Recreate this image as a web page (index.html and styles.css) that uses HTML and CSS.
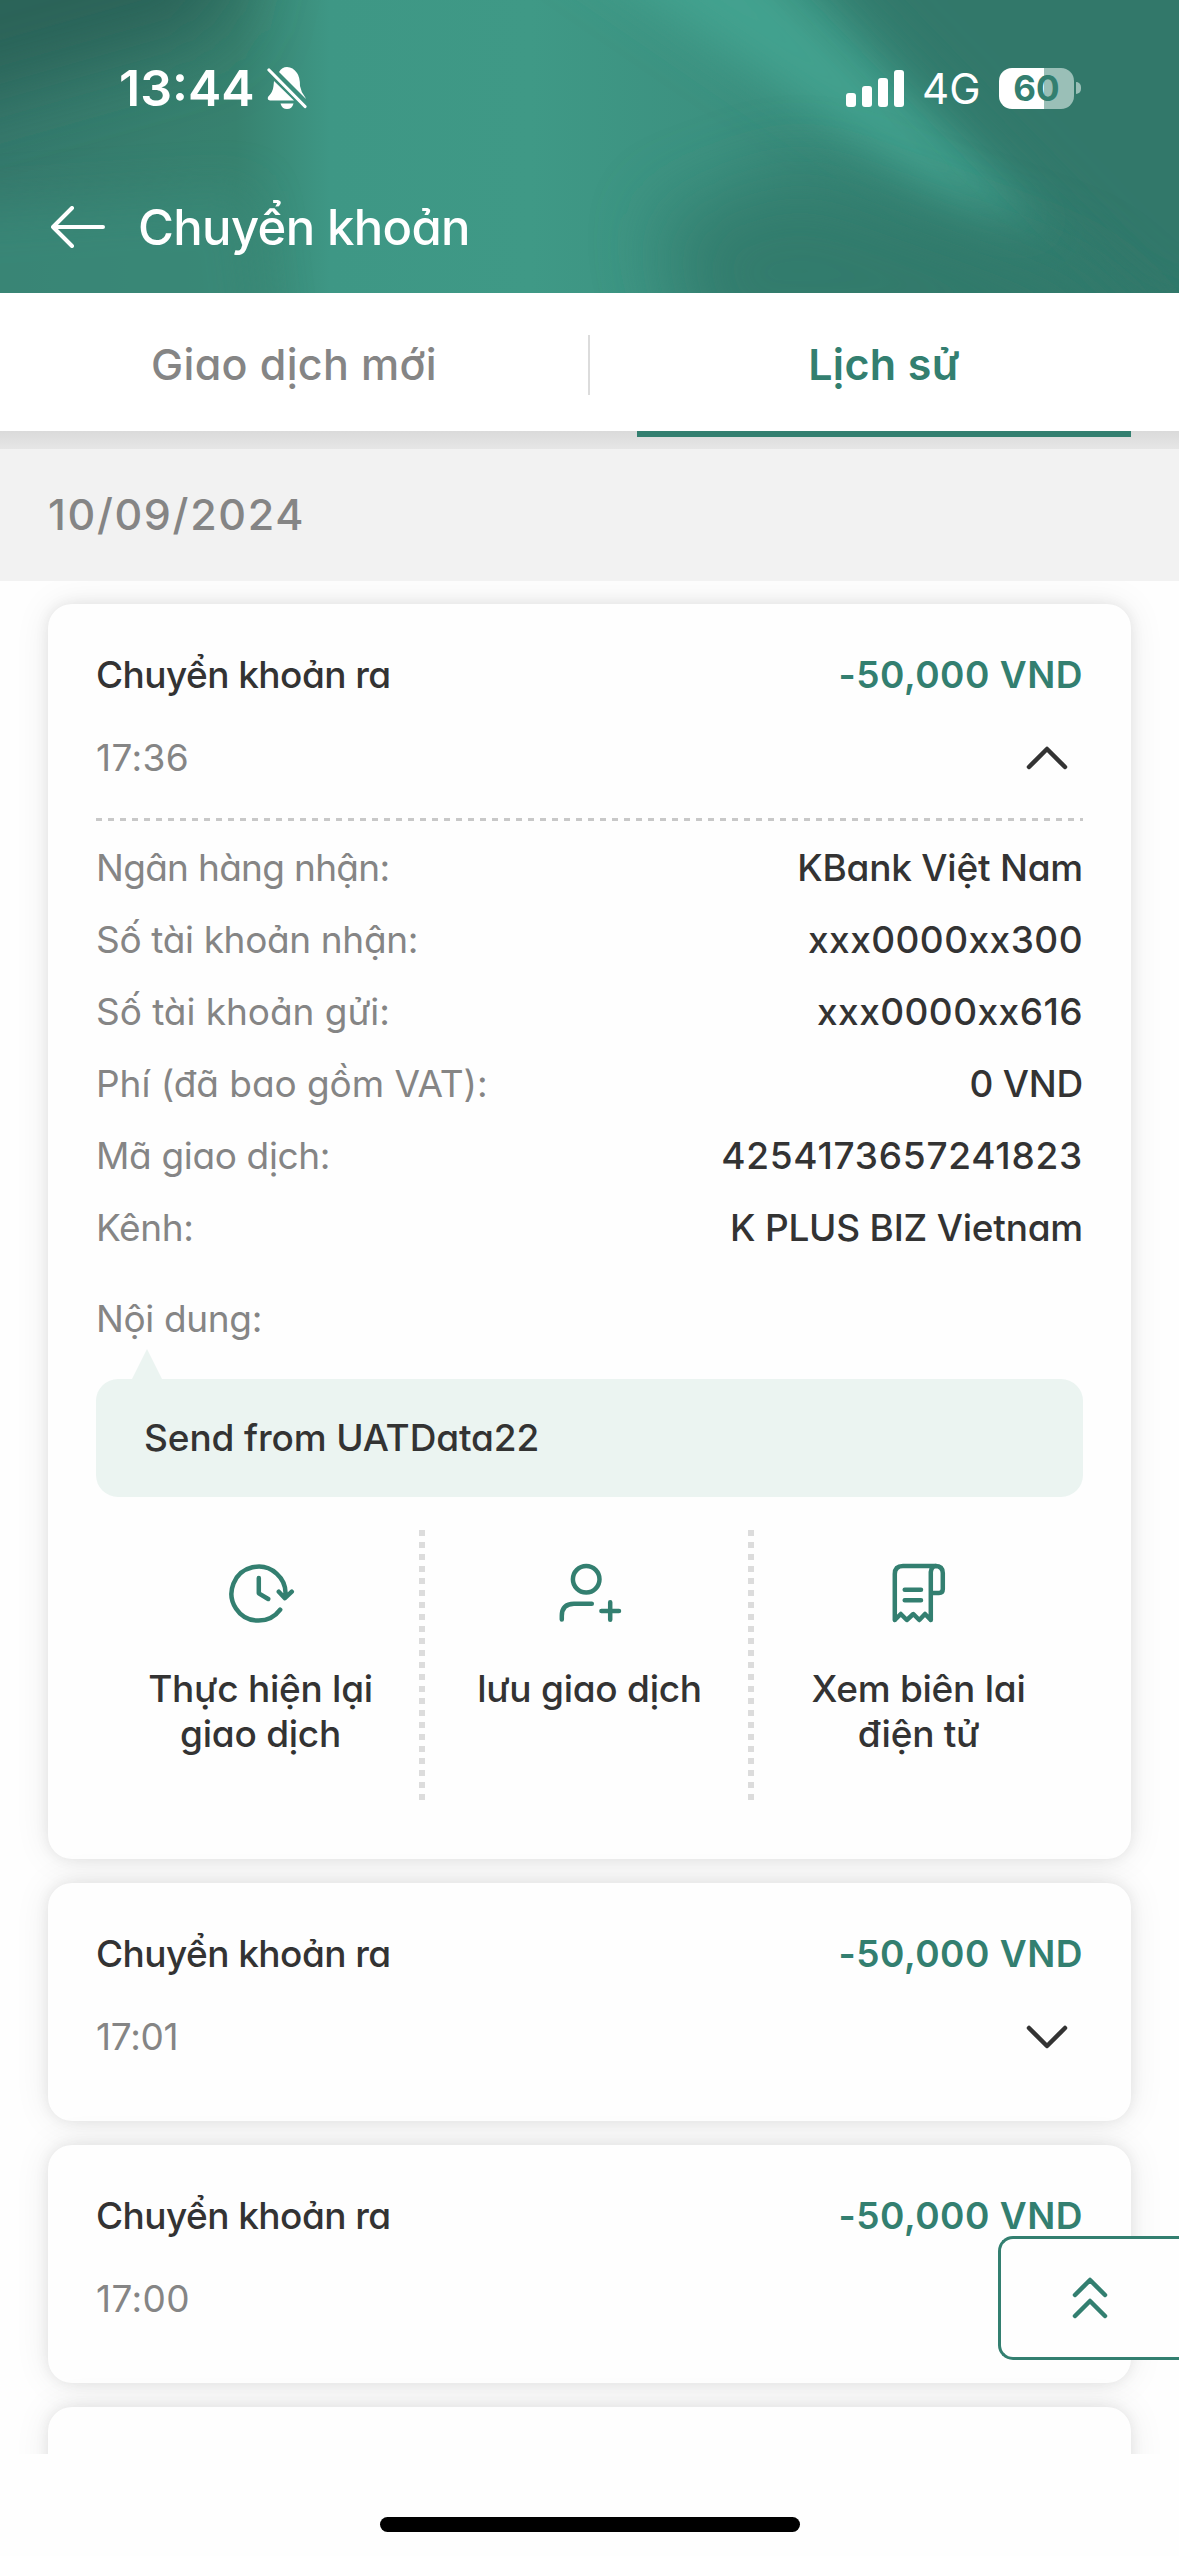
FILE: index.html
```html
<!DOCTYPE html>
<html lang="vi">
<head>
<meta charset="utf-8">
<title>Chuyển khoản</title>
<link rel="stylesheet" href="styles.css">
</head>
<body>
<header class="header">
  <svg class="header-bg" viewBox="0 0 1179 293" preserveAspectRatio="none" aria-hidden="true">
    <defs>
      <linearGradient id="base" x1="0" y1="0" x2="1" y2="0">
        <stop offset="0" stop-color="#35796c"/>
        <stop offset="0.2" stop-color="#37826f"/>
        <stop offset="0.28" stop-color="#3e9785"/>
        <stop offset="0.45" stop-color="#3f9986"/>
        <stop offset="0.6" stop-color="#3c9180"/>
        <stop offset="0.8" stop-color="#337f70"/>
        <stop offset="1" stop-color="#30786a"/>
      </linearGradient>
      <filter id="soft" x="-50%" y="-50%" width="200%" height="200%"><feGaussianBlur stdDeviation="24"/></filter>
      <filter id="softer" x="-50%" y="-80%" width="200%" height="260%"><feGaussianBlur stdDeviation="38"/></filter>
    </defs>
    <rect width="1179" height="293" fill="url(#base)"/>
    <path d="M-100 -100L250 -100L220 30L-100 120Z" fill="#2b6358" filter="url(#softer)"/>
    <path d="M-60 210L250 190L270 360L-60 360Z" fill="#3a8b7a" opacity="0.7" filter="url(#soft)"/>
    <path d="M560 -60L740 -60L1050 230L940 200Z" fill="#43a28f" filter="url(#soft)"/>
    <path d="M800 -60L1300 -60L1300 330L1140 290Z" fill="#30786a" filter="url(#soft)"/>
    <path d="M660 220L800 170L1080 270L1179 360L700 360Z" fill="#33796b" opacity="0.85" filter="url(#softer)"/>
  </svg>
  <div class="status">
    <div class="clock">13:44
      <svg width="40" height="44" viewBox="0 0 40 44" fill="#fff">
        <path d="M7 15L27 34.500H3Q0 34 1 31Q6 26 6.500 20Z"/>
        <path d="M12 6Q15 1 20 1Q26 1 30 7Q33 11 33 20Q34 26 38 31L39 33Z"/>
        <path d="M13.500 37.500H26.500Q25 43 20 43Q15 43 13.500 37.500Z"/>
        <path d="M2 4L38 40.500" stroke="#fff" stroke-width="3.200" stroke-linecap="round"/>
      </svg>
    </div>
    <div class="signals">
      <svg width="58" height="37" viewBox="0 0 58 37" fill="#fff">
        <rect y="23" width="10" height="14" rx="3"/><rect x="16" y="16" width="10" height="21" rx="3"/>
        <rect x="32" y="8" width="10" height="29" rx="3"/><rect x="48" width="10" height="37" rx="3"/>
      </svg>
      <span class="network">4G</span>
      <div class="battery"><span class="level">60</span></div>
      <i class="battery-tip"></i>
    </div>
  </div>
  <div class="title-bar">
    <svg width="54" height="42" viewBox="0 0 54 42" fill="none" stroke="#fff" stroke-width="4" stroke-linecap="round" stroke-linejoin="round"><path d="M21 2L2 21L21 40M2 21H52"/></svg>
    <h1>Chuyển khoản</h1>
  </div>
</header>
<nav class="tabs">
  <a class="tab">Giao dịch mới</a>
  <i class="tab-divider"></i>
  <a class="tab active">Lịch sử</a>
</nav>
<div class="date">10/09/2024</div>
<main class="list">
  <article class="card open">
    <div class="summary"><span class="name">Chuyển khoản ra</span><span class="amount">-50,000 VND</span></div>
    <div class="summary second"><span class="time">17:36</span>
      <svg class="chevron" width="42" height="24" viewBox="0 0 42 24"><path d="M3 21L21 3L39 21"/></svg></div>
    <div class="dashes"></div>
    <dl class="details">
      <div><dt class="snug">Ngân hàng nhận:</dt><dd class="tight">KBank Việt Nam</dd></div>
      <div><dt>Số tài khoản nhận:</dt><dd class="digits">xxx0000xx300</dd></div>
      <div><dt class="regular">Số tài khoản gửi:</dt><dd class="digits">xxx0000xx616</dd></div>
      <div><dt class="regular">Phí (đã bao gồm VAT):</dt><dd class="tight">0 VND</dd></div>
      <div><dt>Mã giao dịch:</dt><dd class="digits long">4254173657241823</dd></div>
      <div><dt>Kênh:</dt><dd class="tight">K PLUS BIZ Vietnam</dd></div>
    </dl>
    <div class="note-label">Nội dung:</div>
    <div class="note">Send from UATData22</div>
    <div class="actions">
      <a class="action">
        <svg width="70" height="70" viewBox="0 0 70 70"><path d="M54.200 51.700A27 27 0 1 1 59.300 39M52.800 33.700L58.900 40.200L65.800 33.700M32.800 20V35.300L42.200 41"/></svg>
        <span>Thực hiện lại<br>giao dịch</span>
      </a>
      <a class="action">
        <svg width="70" height="70" viewBox="0 0 70 70"><circle cx="31.200" cy="21.200" r="13.300"/><path d="M6.800 61.500V58Q6.800 45.700 19 45.700H36.800M55.200 44.200V61.800M46.400 53H64"/></svg>
        <span>lưu giao dịch</span>
      </a>
      <a class="action">
        <svg width="70" height="70" viewBox="0 0 70 70"><path d="M10.800 62V16Q10.800 8 19 8H51Q58.800 8 58.800 15V31Q58.800 35 55 35H46.800M46.800 62V14Q47.500 8 52 8M10.800 62L16.800 56L22.800 62L29.300 56L35.300 62L41 56L46.800 62M20.700 31.700H37M20.700 42.300H37"/></svg>
        <span>Xem biên lai<br>điện tử</span>
      </a>
    </div>
  </article>
  <article class="card">
    <div class="summary"><span class="name">Chuyển khoản ra</span><span class="amount">-50,000 VND</span></div>
    <div class="summary second"><span class="time narrow">17:01</span>
      <svg class="chevron" width="42" height="24" viewBox="0 0 42 24"><path d="M3 3L21 21L39 3"/></svg></div>
  </article>
  <article class="card">
    <div class="summary"><span class="name">Chuyển khoản ra</span><span class="amount">-50,000 VND</span></div>
    <div class="summary second"><span class="time">17:00</span></div>
  </article>
  <article class="card"></article>
</main>
<a class="to-top" aria-label="Lên đầu trang">
  <svg width="36" height="42" viewBox="0 0 36 42"><path d="M3 18L18 3L33 18M3 39L18 24L33 39"/></svg>
</a>
<footer class="home"><i></i></footer>
</body>
</html>
```
FILE: styles.css
```css
* { box-sizing: border-box; }
body { margin: 0; width: 1179px; height: 2556px; overflow: hidden; position: relative; background: #fefefe; color: #333; font-family: Inter, "Noto Sans", sans-serif; font-feature-settings: "cv11"; display: flex; flex-direction: column; }
svg { display: block; flex: none; }

.header { height: 293px; flex: none; position: relative; color: #fff; }
.header-bg { position: absolute; inset: 0; width: 100%; height: 100%; overflow: hidden; }
.status { position: relative; height: 176px; padding: 0 98px 0 119px; display: flex; justify-content: space-between; align-items: center; font-feature-settings: normal; }
.clock { display: flex; align-items: center; gap: 12px; font-size: 50px; font-weight: 600; }
.signals { display: flex; align-items: center; }
.network { font-size: 42px; margin-left: 18px; width: 59px; }
.battery { width: 75px; height: 41px; margin-left: 18px; border-radius: 13px; background: linear-gradient(90deg, #fff 60%, #9abfb7 60%); display: flex; align-items: center; justify-content: center; color: #337f70; font-size: 35px; font-weight: 700; }
.battery-tip { width: 5px; height: 12px; margin-left: 2px; border-radius: 0 6px 6px 0; background: #9abfb7; }
.title-bar { position: relative; display: flex; align-items: center; height: 102px; padding-left: 51px; gap: 33px; }
.title-bar h1 { margin: 0; font-size: 49px; font-weight: 500; letter-spacing: -0.65px; }

.tabs { height: 138px; flex: none; background: #fff; display: flex; align-items: center; padding: 0 48px 0 0; font-size: 43px; font-weight: 500; color: #858585; }
.tab { height: 144px; align-self: flex-start; line-height: 143px; text-align: center; width: 588px; z-index: 1; letter-spacing: 0.35px; }
.tab-divider { width: 2px; height: 60px; margin: 5px 47px 0 0; background: #dcdcdc; }
.tab.active { width: 494px; color: #337f70; font-weight: 600; border-bottom: 6px solid #337f70; }

.date { height: 150px; flex: none; padding: 18px 48px 0; line-height: 130px; font-size: 43px; font-weight: 500; letter-spacing: 1.65px; color: #858585; background: linear-gradient(#dadada, #e6e6e6) 0 0 / 100% 18px no-repeat #f2f2f2; }

.list { height: 1873px; flex: none; overflow: hidden; padding: 23px 48px 0; display: flex; flex-direction: column; gap: 24px; }
.card { height: 238px; flex: none; padding: 48px; border-radius: 24px; background: #fefefe; box-shadow: 0 0 36px rgba(0, 0, 0, 0.08), 0 0 14px rgba(0, 0, 0, 0.08); font-size: 37px; }
.card.open { height: 1255px; }
.summary { height: 46px; line-height: 46px; display: flex; justify-content: space-between; align-items: center; }
.summary.second { margin-top: 37px; padding-right: 15px; }
.name { font-weight: 500; letter-spacing: -0.55px; }
.amount { font-weight: 600; letter-spacing: 0.5px; color: #337f70; }
.time { letter-spacing: 0.4px; color: #858585; }
.time.narrow { letter-spacing: -0.3px; }
.chevron path { fill: none; stroke: #333; stroke-width: 4.5; stroke-linecap: round; stroke-linejoin: round; }
.dashes { margin-top: 37px; height: 3px; background: repeating-linear-gradient(90deg, #c8c8c8 0 6px, transparent 6px 12px); }
.details { margin: 24px 0 0; }
.details div { height: 46px; line-height: 46px; margin-bottom: 26px; display: flex; justify-content: space-between; }
.details dt { letter-spacing: -0.35px; color: #858585; }
.details dt.snug { letter-spacing: -0.7px; }
.details dt.regular { letter-spacing: -0.05px; }
.details dd { margin: 0; font-weight: 500; }
.details .tight { letter-spacing: -0.22px; }
.details .digits { letter-spacing: 0.45px; }
.details .long { letter-spacing: 0.75px; }
.note-label { height: 46px; line-height: 46px; margin-top: 45px; letter-spacing: -0.35px; color: #858585; }
.note { position: relative; height: 118px; margin-top: 37px; padding-left: 48px; line-height: 118px; border-radius: 22px; background: #ebf4f1; font-weight: 500; letter-spacing: -0.12px; }
.note::before { content: ""; position: absolute; left: 36px; top: -30px; border: 15px solid transparent; border-top: 0; border-bottom: 30px solid #ebf4f1; }
.actions { margin-top: 33px; height: 270px; display: grid; grid-template-columns: repeat(3, 329px); }
.action { display: flex; flex-direction: column; align-items: center; padding-top: 28px; text-align: center; font-weight: 500; line-height: 45px; letter-spacing: -0.25px; background: repeating-linear-gradient(#dcdcdc 0 6px, transparent 6px 12px) 100% 0 / 6px 100% no-repeat; }
.action:last-child { background: none; }
.action svg { margin-bottom: 38px; fill: none; stroke: #337f70; stroke-width: 4.5; stroke-linecap: round; stroke-linejoin: round; }

.to-top { position: absolute; right: 0; top: 2236px; width: 181px; height: 124px; display: flex; align-items: center; justify-content: center; background: #fefefe; border: 3px solid #337f70; border-right: 0; border-radius: 15px 0 0 15px; }
.to-top path { fill: none; stroke: #337f70; stroke-width: 4.5; stroke-linecap: round; stroke-linejoin: round; }
.home { flex: 1; display: flex; justify-content: center; align-items: flex-end; padding-bottom: 24px; }
.home i { width: 420px; height: 15px; border-radius: 8px; background: #000; }
```
